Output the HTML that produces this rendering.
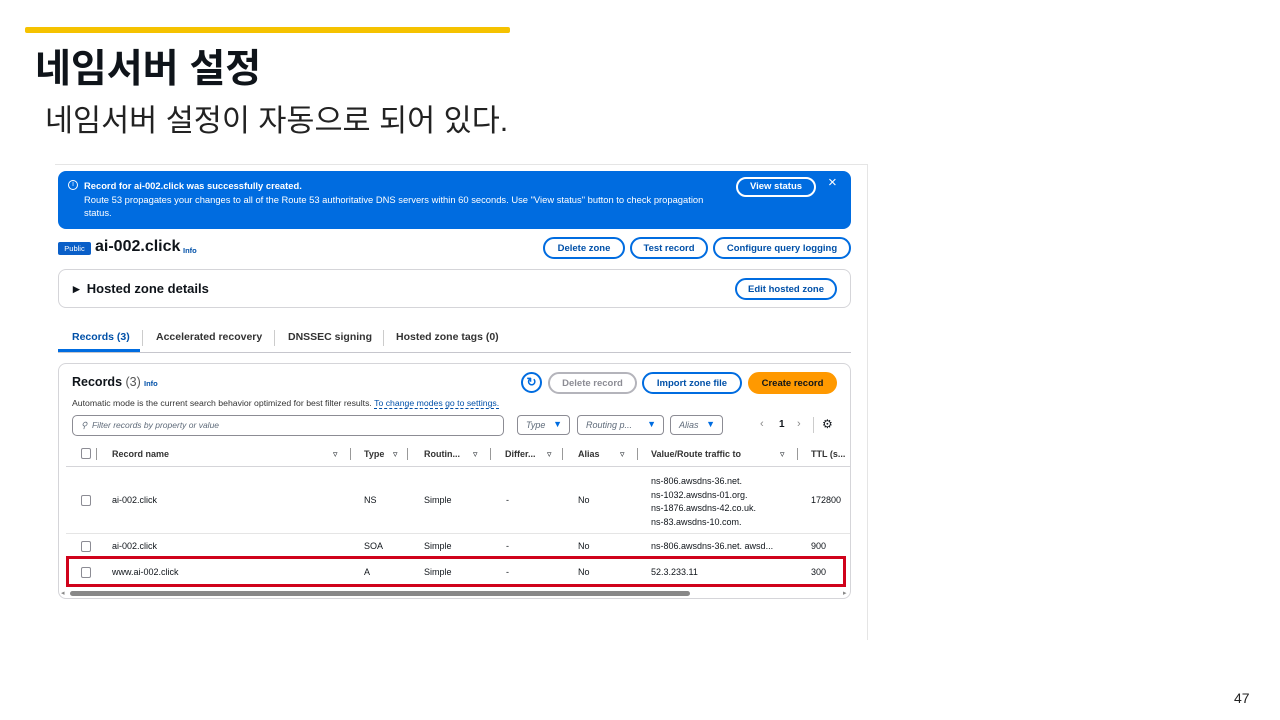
<!DOCTYPE html>
<html><head><meta charset="utf-8"><style>
*{margin:0;padding:0;box-sizing:border-box}
body{width:1280px;height:720px;background:#fff;position:relative;overflow:hidden;font-family:"Liberation Sans","Noto Sans CJK KR",sans-serif;color:#0f141a}
.a{position:absolute}
.btn{position:absolute;border:2px solid #006ce0;border-radius:14px;color:#0050a8;font-weight:bold;font-size:9.5px;display:flex;align-items:center;justify-content:center;background:#fff}
.t{position:absolute;font-size:9px;white-space:nowrap}
.h{position:absolute;font-size:9px;font-weight:bold;white-space:nowrap;color:#333}
.cb{position:absolute;width:10px;height:11px;border:1px solid #8c8c94;border-radius:2px}
.sep{position:absolute;width:1px;height:12px;background:#999}
.dd{position:absolute;border:1px solid #8c8c94;border-radius:4px;height:20px;font-size:9px;font-style:italic;color:#5f6b7a;padding:4px 8px}
.tri{color:#006ce0;font-style:normal;position:absolute;right:7px;top:3px;font-size:9px}
</style></head><body>
<div class="a" style="left:25px;top:27px;width:485px;height:6px;background:#f5c200;border-radius:2px"></div>
<div class="a" style="left:35px;top:38px;font-size:39px;font-weight:bold;letter-spacing:0px">네임서버 설정</div>
<div class="a" style="left:45px;top:96px;font-size:30.5px;color:#222">네임서버 설정이 자동으로 되어 있다.</div>
<div class="a" style="left:1234px;top:690px;font-size:14px;color:#222">47</div>

<div class="a" style="left:55px;top:164px;width:813px;height:1px;background:#e5e5e5"></div>
<div class="a" style="left:867px;top:164px;width:1px;height:476px;background:#e5e5e5"></div>

<div class="a" style="left:58px;top:171px;width:793px;height:58px;background:#006ce0;border-radius:8px;color:#fff;font-size:9.4px;line-height:13.5px;padding:8px 10px 0 26px">
<div class="a" style="left:10px;top:9px;width:10px;height:10px;border:1px solid #fff;border-radius:50%;font-size:7px;line-height:8px;text-align:center">i</div>
<b>Record for ai-002.click was successfully created.</b><br>Route 53 propagates your changes to all of the Route 53 authoritative DNS servers within 60 seconds. Use "View status" button to check propagation<br>status.
<div class="a" style="left:678px;top:6px;width:80px;height:20px;border:2px solid #fff;border-radius:12px;font-weight:bold;font-size:9.5px;text-align:center;line-height:16px">View status</div>
<div class="a" style="left:770px;top:5px;font-size:15px">×</div>
</div>

<div class="a" style="left:58px;top:242px;width:33px;height:13px;background:#0a5fc8;border-radius:2px;color:#fff;font-size:7.5px;text-align:center;line-height:13px">Public</div>
<div class="a" style="left:95px;top:238px;font-size:16px;font-weight:bold">ai-002.click</div>
<div class="a" style="left:183px;top:246px;font-size:7.5px;color:#0050a8;font-weight:bold">Info</div>
<div class="btn" style="left:543px;top:237px;width:82px;height:22px">Delete zone</div>
<div class="btn" style="left:630px;top:237px;width:78px;height:22px">Test record</div>
<div class="btn" style="left:713px;top:237px;width:138px;height:22px">Configure query logging</div>

<div class="a" style="left:58px;top:269px;width:793px;height:39px;border:1px solid #d5d5d9;border-radius:8px"></div>
<div class="a" style="left:73px;top:281px;font-size:13px;font-weight:bold">▸&nbsp; Hosted zone details</div>
<div class="btn" style="left:735px;top:278px;width:102px;height:22px">Edit hosted zone</div>

<div class="a" style="left:58px;top:352px;width:793px;height:1px;background:#c6c6cd"></div>
<div class="a" style="left:58px;top:349px;width:82px;height:3px;background:#006ce0"></div>
<div class="a" style="left:72px;top:331px;font-size:10.5px;color:#0050a8;font-weight:bold">Records (3)</div>
<div class="sep" style="left:142px;top:330px;height:16px;background:#ccc"></div>
<div class="a" style="left:156px;top:331px;font-size:10.5px;font-weight:bold;color:#333">Accelerated recovery</div>
<div class="sep" style="left:274px;top:330px;height:16px;background:#ccc"></div>
<div class="a" style="left:288px;top:331px;font-size:10.5px;font-weight:bold;color:#333">DNSSEC signing</div>
<div class="sep" style="left:383px;top:330px;height:16px;background:#ccc"></div>
<div class="a" style="left:396px;top:331px;font-size:10.5px;font-weight:bold;color:#333">Hosted zone tags (0)</div>

<div class="a" style="left:58px;top:363px;width:793px;height:236px;border:1px solid #d5d5d9;border-radius:8px"></div>
<div class="a" style="left:72px;top:375px;font-size:12.5px;font-weight:bold">Records <span style="font-weight:normal;color:#555">(3)</span></div>
<div class="a" style="left:144px;top:379px;font-size:7.5px;color:#0050a8;font-weight:bold">Info</div>
<div class="a" style="left:521px;top:372px;width:21px;height:21px;border:2px solid #006ce0;border-radius:50%;color:#006ce0;font-size:12px;text-align:center;line-height:17px;font-weight:bold">↻</div>
<div class="btn" style="left:548px;top:372px;width:89px;height:22px;border-color:#b4b4bb;color:#8c8c94">Delete record</div>
<div class="btn" style="left:642px;top:372px;width:100px;height:22px">Import zone file</div>
<div class="btn" style="left:748px;top:372px;width:89px;height:22px;background:#ff9900;border-color:#ff9900;color:#0f141a">Create record</div>
<div class="a" style="left:72px;top:398px;font-size:8.7px;color:#333">Automatic mode is the current search behavior optimized for best filter results. <span style="color:#0050a8;border-bottom:1px dashed #0050a8">To change modes go to settings.</span></div>

<div class="a" style="left:72px;top:415px;width:432px;height:21px;border:1px solid #8c8c94;border-radius:5px;font-size:8.5px;font-style:italic;color:#5f6b7a;padding:4px 8px">⚲&nbsp; Filter records by property or value</div>
<div class="dd" style="left:517px;top:415px;width:53px">Type<span class="tri">▼</span></div>
<div class="dd" style="left:577px;top:415px;width:87px">Routing p...<span class="tri">▼</span></div>
<div class="dd" style="left:670px;top:415px;width:53px">Alias<span class="tri">▼</span></div>
<div class="a" style="left:760px;top:418px;font-size:11px;color:#888">‹</div>
<div class="a" style="left:779px;top:419px;font-size:10px;font-weight:bold">1</div>
<div class="a" style="left:797px;top:418px;font-size:11px;color:#888">›</div>
<div class="sep" style="left:813px;top:417px;height:16px;background:#ccc"></div>
<div class="a" style="left:822px;top:417px;font-size:12px">⚙</div>

<div class="cb" style="left:81px;top:448px"></div><div class="sep" style="left:96px;top:448px"></div>
<div class="h" style="left:112px;top:449px">Record name</div><div class="t" style="left:333px;top:449px">▿</div><div class="sep" style="left:350px;top:448px"></div>
<div class="h" style="left:364px;top:449px">Type</div><div class="t" style="left:393px;top:449px">▿</div><div class="sep" style="left:407px;top:448px"></div>
<div class="h" style="left:424px;top:449px">Routin...</div><div class="t" style="left:473px;top:449px">▿</div><div class="sep" style="left:490px;top:448px"></div>
<div class="h" style="left:505px;top:449px">Differ...</div><div class="t" style="left:547px;top:449px">▿</div><div class="sep" style="left:562px;top:448px"></div>
<div class="h" style="left:578px;top:449px">Alias</div><div class="t" style="left:620px;top:449px">▿</div><div class="sep" style="left:637px;top:448px"></div>
<div class="h" style="left:651px;top:449px">Value/Route traffic to</div><div class="t" style="left:780px;top:449px">▿</div><div class="sep" style="left:797px;top:448px"></div>
<div class="h" style="left:811px;top:449px">TTL (s...</div>
<div class="a" style="left:66px;top:466px;width:784px;height:1px;background:#d5d5d9"></div>

<div class="cb" style="left:81px;top:495px"></div>
<div class="t" style="left:112px;top:495px">ai-002.click</div><div class="t" style="left:364px;top:495px">NS</div><div class="t" style="left:424px;top:495px">Simple</div><div class="t" style="left:506px;top:495px">-</div><div class="t" style="left:578px;top:495px">No</div>
<div class="t" style="left:651px;top:475px;line-height:13.5px">ns-806.awsdns-36.net.<br>ns-1032.awsdns-01.org.<br>ns-1876.awsdns-42.co.uk.<br>ns-83.awsdns-10.com.</div>
<div class="t" style="left:811px;top:495px">172800</div>
<div class="a" style="left:66px;top:533px;width:784px;height:1px;background:#e5e5e5"></div>

<div class="cb" style="left:81px;top:541px"></div>
<div class="t" style="left:112px;top:541px">ai-002.click</div><div class="t" style="left:364px;top:541px">SOA</div><div class="t" style="left:424px;top:541px">Simple</div><div class="t" style="left:506px;top:541px">-</div><div class="t" style="left:578px;top:541px">No</div><div class="t" style="left:651px;top:541px">ns-806.awsdns-36.net. awsd...</div><div class="t" style="left:811px;top:541px">900</div>

<div class="a" style="left:66px;top:556px;width:780px;height:31px;border:3px solid #d0021b"></div>
<div class="cb" style="left:81px;top:567px"></div>
<div class="t" style="left:112px;top:567px">www.ai-002.click</div><div class="t" style="left:364px;top:567px">A</div><div class="t" style="left:424px;top:567px">Simple</div><div class="t" style="left:506px;top:567px">-</div><div class="t" style="left:578px;top:567px">No</div><div class="t" style="left:651px;top:567px">52.3.233.11</div><div class="t" style="left:811px;top:567px">300</div>

<div class="a" style="left:70px;top:591px;width:620px;height:5px;background:#888;border-radius:3px"></div>
<div class="a" style="left:61px;top:589px;font-size:7px;color:#888">◂</div>
<div class="a" style="left:843px;top:589px;font-size:7px;color:#888">▸</div>
</body></html>
